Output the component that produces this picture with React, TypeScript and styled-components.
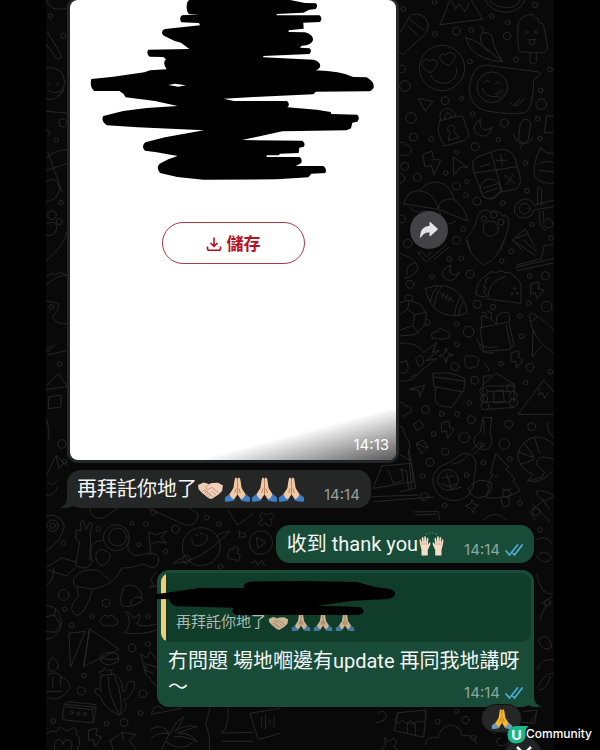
import React from "react";
import styled, { createGlobalStyle } from "styled-components";

const GlobalStyle = createGlobalStyle`
  * { box-sizing: border-box; }
  body {
    margin: 0;
    background: #000;
    font-family: Roboto, "Noto Sans CJK TC", sans-serif;
    color: #f4f6f5;
  }
`;

const Page = styled.div`
  position: relative;
  height: 100vh;
  overflow: hidden;
  padding: 0 46px;
`;

const Chat = styled.main`
  position: relative;
  height: 100%;
  overflow: hidden;
  background: #090909;
`;

const Wallpaper = styled.svg`
  position: absolute;
  inset: 0;
  width: 100%;
  height: 100%;
  fill: none;
  stroke: #272728;
  stroke-width: 3;
  stroke-linecap: round;
  stroke-linejoin: round;
`;

const Thread = styled.div`
  position: relative;
  display: flex;
  flex-direction: column;
  margin-top: -3px;
  padding: 0 20px 0 21px;
`;

const MediaRow = styled.div`
  display: flex;
  align-items: center;
  gap: 11px;
  margin-bottom: 7px;
`;

const MediaBubble = styled.article`
  width: 332px;
  padding: 3px;
  border-radius: 11px;
  background: #252627;
`;

const Photo = styled.div`
  position: relative;
  display: flex;
  flex-direction: column;
  align-items: center;
  height: 460px;
  overflow: hidden;
  border-radius: 8px;
  background: #fff;
`;

const PhotoScribble = styled.svg`
  display: block;
  width: 100%;
  height: 180px;
`;

const SaveButton = styled.button`
  display: flex;
  align-items: center;
  justify-content: center;
  gap: 5px;
  width: 143px;
  height: 42px;
  margin-top: 42px;
  padding: 0 0 1px;
  border: 1px solid #a83a42;
  border-radius: 21px;
  background: #fff;
  color: #b5121f;
  font-family: inherit;
  font-size: 17px;
  font-weight: 700;
  svg { margin-top: 2px; }
`;

const PhotoShade = styled.div`
  position: absolute;
  right: 0;
  bottom: 0;
  display: flex;
  align-items: flex-end;
  justify-content: flex-end;
  width: 200px;
  height: 60px;
  padding: 0 7px 6px;
  background: linear-gradient(165deg, transparent 53%, rgba(0, 0, 0, 0.66) 100%);
`;

const Time = styled.time<{ $tone: string }>`
  font-family: Inter, sans-serif;
  font-size: 15px;
  line-height: 18px;
  color: ${(p) => p.$tone};
`;

const ForwardButton = styled.button`
  display: grid;
  place-items: center;
  width: 38px;
  height: 38px;
  padding: 0;
  border: 0;
  border-radius: 50%;
  background: #434345;
`;

const Bubble = styled.article`
  position: relative;
  align-self: flex-start;
  display: flex;
  align-items: center;
  gap: 19px;
  height: 38px;
  padding: 0 11px 0 10px;
  border-radius: 14px;
  background: #252726;
`;

const SentBubble = styled(Bubble)`
  align-self: flex-end;
  margin-top: 17px;
  padding: 0 11px;
  background: #184c38;
`;

const Text = styled.p`
  display: flex;
  align-items: center;
  margin: 0;
  font-size: 20px;
  line-height: 26px;
`;

const Emojis = styled.span<{ $gap: number }>`
  display: inline-flex;
  align-items: center;
  gap: ${(p) => p.$gap}px;
`;

const Meta = styled.span`
  display: flex;
  align-items: center;
  align-self: flex-end;
  gap: 5px;
  padding-bottom: 4px;
`;

const Tail = styled.svg<{ $side: "left" | "right" }>`
  position: absolute;
  bottom: 0;
  ${(p) => p.$side}: -7px;
  width: 18px;
  height: 18px;
`;

const ReplyBubble = styled.article`
  position: relative;
  align-self: flex-end;
  width: 377px;
  margin-top: 7px;
  padding: 3px 3px 5px 4px;
  border-radius: 12px;
  background: #184c38;
`;

const Quote = styled.blockquote`
  display: flex;
  align-items: flex-end;
  height: 69px;
  margin: 0;
  padding: 0 10px 8px 15px;
  border-radius: 9px;
  background: linear-gradient(90deg, #f3cd75 5px, #103c2a 5px);
`;

const QuoteText = styled.p`
  display: flex;
  align-items: center;
  gap: 2px;
  margin: 0;
  font-size: 15px;
  line-height: 24px;
  color: #a9bbb2;
`;

const QuoteScribble = styled.svg`
  position: absolute;
  top: 8px;
  left: -2px;
  width: 240px;
  height: 38px;
`;

const ReplyBody = styled.div`
  display: flex;
  flex-wrap: wrap;
  justify-content: space-between;
  padding: 6px 8px 0 7px;
`;

const ReplyText = styled.span`
  font-size: 20px;
  line-height: 26px;
`;

const ReplyMeta = styled.span`
  display: flex;
  align-items: center;
  gap: 5px;
  height: 18px;
  margin-top: 10px;
`;

const Reaction = styled.button`
  position: absolute;
  right: 12px;
  bottom: -26px;
  display: grid;
  place-items: center;
  width: 41px;
  height: 29px;
  padding: 0;
  border: 1px solid #101211;
  border-radius: 15px;
  background: #252726;
`;

const ScrollButton = styled.button`
  position: absolute;
  right: 12px;
  bottom: -24px;
  display: flex;
  justify-content: center;
  width: 37px;
  height: 37px;
  padding: 9px 0 0;
  border: 0;
  border-radius: 50%;
  background: #222324;
`;

const Brand = styled.div`
  position: absolute;
  right: 8px;
  bottom: 4px;
  display: flex;
  align-items: center;
  color: #fff;
  font-family: Inter, sans-serif;
  font-size: 12px;
  font-weight: 500;
  line-height: 24px;
`;

const BrandMark = styled.span`
  position: relative;
  display: grid;
  place-items: center;
  width: 19px;
  height: 22px;
  font-family: Lato, sans-serif;
  font-size: 14px;
  font-weight: 900;
  svg { position: absolute; inset: 0; }
  b { position: relative; }
`;

function Pray({ size = 27, skin = "#f3c9a5", line = "#b98463", sleeve = "#3f7fc6" }) {
  return (
    <svg width={size} height={size} viewBox="0 0 27 27" role="img" aria-label="folded hands">
      <path d="M1 21.5 6 17.5 12 20.5 10 24.5 Q6 26 1 25.5Z" fill={sleeve} />
      <path d="M26 21.5 21 17.5 15 20.5 17 24.5 Q21 26 26 25.5Z" fill={sleeve} />
      <path d="M12.2 1.5 Q10.8 1.4 10.6 4 L9.4 12 5.6 18 Q6.5 22 9.8 23.2 L13.5 18.5 V3Z" fill={skin} />
      <path d="M14.8 1.5 Q16.2 1.4 16.4 4 L17.6 12 21.4 18 Q20.5 22 17.2 23.2 L13.5 18.5 V3Z" fill={skin} />
      <path d="M13.5 3V18.5M12 12.5 10.8 17M15 12.5 16.2 17" fill="none" stroke={line} strokeWidth="1" />
    </svg>
  );
}

function Handshake({ size = 27, skin = "#f1cfb8", line = "#b98b75" }) {
  return (
    <svg width={size} height={size} viewBox="0 0 27 27" role="img" aria-label="handshake">
      <path d="M1 9 6.5 6.5 12 8 15 7 21 6.7 26 9.5 25 15 21.5 18.5 15.5 22.5 Q13.5 23.5 11 21.8 L4.5 16.5 1.5 13Z" fill={skin} />
      <path d="M12 8 8.5 12 Q9.5 14.5 13 12.2 L15 11.5 22 17M19 19 14.5 15M16.5 21 12 17.5M5 15.8 7 14 9 15 7.5 17.8M9 15l2 1-1.5 3.5M11 17l2 1.5-1.4 2.8" fill="none" stroke={line} strokeWidth="0.8" strokeLinejoin="round" />
    </svg>
  );
}

function RaisedHands() {
  return (
    <svg width="27" height="27" viewBox="0 0 27 27" role="img" aria-label="raised hands">
      {[false, true].map((flip) => (
        <g key={String(flip)} transform={flip ? "translate(27 0) scale(-1 1)" : undefined}>
          <path d="M2 13 Q1 8 2.5 8 L4 12 3.8 6.5 Q4.8 5.2 5.5 7 L6 11.5 6.3 5.6 Q7.4 4.5 8 6.4 L8 11.5 9 7 Q10.3 6 10.4 8 L9.8 14 11.2 11.6 Q13 11.3 12.2 13.8 L9.8 19 V24.5 H3.5 V19Z" fill="#f5dcc5" />
          <path d="M4 12V14M6 11.5V14M8 11.5V14" stroke="#c99f83" strokeWidth=".7" />
          <path d="M9 3.8 8.4 2.2M12 2.6V1.2" stroke="#668477" strokeWidth="1" />
        </g>
      ))}
    </svg>
  );
}

function Ticks() {
  return (
    <svg width="18" height="14" viewBox="0 0 18 14" fill="none" stroke="#50aed6" strokeWidth="1.7" role="img" aria-label="read">
      <path d="M1 8 4.5 12 12.5 2M8 10.5 9.5 12 17.2 2" strokeLinecap="round" strokeLinejoin="round" />
    </svg>
  );
}

type Dot = [number, number, number];
function Dots({ items }: { items: Dot[] }) {
  return (
    <>
      {items.map(([x, y, r]) => (
        <circle key={`${x}-${y}`} cx={x} cy={y} r={r} />
      ))}
    </>
  );
}

const upperDots: Dot[] = [
  [10, 27, 7], [104, 6, 7], [105, 102, 7], [169, 93, 12], [214, 90, 7], [275, 49, 7], [323, 68, 7], [321, 108, 11],
  [405, 15, 8], [348, 179, 8], [210, 184, 7], [5, 207, 12], [15, 258, 16], [135, 302, 12], [185, 295, 6], [33, 354, 16],
  [424, 313, 16], [422, 271, 7], [313, 369, 12], [413, 356, 7], [218, 342, 7], [40, 411, 12], [94, 417, 7], [225, 440, 12],
  [295, 419, 7], [170, 456, 6], [14, 499, 12], [52, 532, 12], [137, 519, 7], [169, 558, 12], [200, 545, 6], [376, 489, 7],
  [231, 604, 12], [308, 609, 7], [381, 572, 7], [198, 585, 7], [190, 688, 7], [170, 721, 12], [23, 731, 13], [395, 673, 7], [450, 208, 7],
  [5, 657, 12], [453, 714, 7], [420, 416, 7],
];

const lowerDots: Dot[] = [
  [148, 57, 7], [184, 55, 7], [96, 110, 7], [210, 103, 12], [30, 133, 12], [334, 34, 7], [305, 63, 7],
  [389, 108, 7], [436, 107, 12], [440, 200, 16], [386, 190, 7], [232, 193, 12], [279, 201, 8], [170, 253, 7], [206, 275, 16],
  [360, 229, 7], [365, 289, 7], [171, 313, 7], [165, 380, 12], [303, 371, 7], [390, 382, 12], [452, 395, 7], [224, 421, 12],
  [377, 428, 7], [208, 489, 7], [76, 509, 12], [125, 522, 7], [171, 522, 7], [214, 539, 12], [326, 553, 12], [395, 560, 12],
  [193, 592, 16], [101, 582, 7], [313, 612, 16], [135, 635, 11], [330, 657, 7], [250, 668, 7], [90, 667, 12], [68, 708, 7],
  [73, 770, 12], [134, 797, 7], [360, 789, 7],
];

const leftDots: Dot[] = [
  [70, 129, 7], [175, 86, 7], [276, 70, 6], [318, 72, 7], [340, 37, 8], [407, 87, 12], [500, 53, 7], [537, 72, 7],
  [377, 155, 7], [296, 134, 6], [71, 285, 16], [75, 328, 7], [198, 309, 12], [155, 349, 7], [95, 376, 7], [323, 349, 7],
  [276, 444, 12], [323, 432, 8], [267, 505, 7], [132, 527, 7], [124, 573, 12], [309, 581, 12], [200, 671, 7], [252, 668, 12],
  [302, 639, 7], [40, 663, 7], [542, 200, 7], [440, 178, 12],
];

function ChatWallpaper() {
  return (
    <Wallpaper viewBox="46 0 508 750" preserveAspectRatio="xMinYMin slice" aria-hidden="true">
      <g transform="translate(400 0) scale(.3333)">
        <Dots items={upperDots} />
        <path d="M150 0 120 74 248 58 214 0M155 3 167 28 178 10 194 36 208 7" />
        <path d="M255 0Q275 37 322 37 363 32 375 0M267 0Q285 22 322 23 352 22 361 0" />
        <path d="M36 44Q72 34 85 72L80 98 8 164-10 150M0 98 30 49M21 76 55 108M30 58 72 91" />
        <path d="M354 75Q360 43 399 43 399 57 414 54 414 72 427 70 432 76 435 94L443 145Q439 159 421 158L362 156Q350 154 354 75ZM390 160V186Q400 198 409 186V160M374 90l12 6-12 6M414 89l-11 7 13 5M382 120 407 118M388 121v10q8 8 15 0v-10" />
        <circle cx="126" cy="204" r="68" />
        <path d="M91 218Q62 204 66 189 75 171 89 184 100 170 112 187 115 201 91 218ZM147 197Q119 188 119 171 124 157 138 165 149 149 164 164 170 176 147 197ZM92 226Q106 255 143 248 172 240 170 207" />
        <path d="M197 112Q240 125 272 157 290 172 308 185 240 181 211 144 202 130 197 112ZM240 77Q257 89 246 101 235 111 249 139 258 154 270 155M246 100Q262 92 277 110 278 143 308 184" />
        <path d="M253 195Q215 199 208 264 207 321 261 333 336 347 373 338 399 332 401 241L423 221 415 216Z" />
        <circle cx="277" cy="262" r="46" />
        <path d="M254 247q7-12 15 0M286 251q8-10 15 1M247 265q8 30 46 24M287 282l18-15M289 288l21-16M295 297l20-18M329 307l12 11 17-20M344 315l8 3 20-22" />
        <path d="m56 296 43 8-22 29ZM116 378Q107 394 134 438L195 421 207 406 188 348 164 350 119 363ZM122 360q-10-30 20-35 24 3 25 27M134 357q0-17 9-18 12 1 11 14M143 389q0-15 14-13 14 8 4 18l16 19-32 8 4-22Z" />
        <path d="M241 358Q211 377 228 400 263 424 276 381 256 398 243 381 237 370 241 358ZM361 372Q366 355 383 359 394 363 391 379L385 418Q370 440 356 418ZM341 402Q347 430 368 432 392 431 397 412M365 433 362 445M440 348H460M440 348 433 398H460" />
        <path d="M69 463 96 453 101 479 122 480 102 526 94 496 76 500ZM160 471 204 503 183 500 162 525Z" />
        <path d="M220 482Q213 497 230 539L251 592Q276 604 294 578L348 567Q365 557 360 528L344 471Q329 444 296 449L244 466Q226 471 220 482ZM274 459 306 574M225 519 352 500M240 501 268 492M289 481h31M302 463l5 33M314 526l30 24M339 524l-20 30M250 564 291 552M253 578 291 565" />
        <circle cx="271" cy="567" r="30" />
        <path d="M422 443Q398 487 403 525 416 553 460 550M422 443Q434 463 460 460M420 490q20-10 40-2M417 511l43 5M413 565q8-7 12 3v48M413 565v50M460 601l-57 14q-17-27-41-14-25 14-17 39 20 24 45 9 10-7 11-19l59-10M419 634q-6 50 20 58M430 633v27" />
        <circle cx="374" cy="626" r="16" /><circle cx="445" cy="670" r="14" />
        <path d="M11 612Q21 572 55 572 103 575 115 627 117 595 158 597 194 615 203 663L115 628 11 612M60 571Q90 533 132 552 158 571 162 597M31 623Q50 645 74 632M119 634q10 58 48 29" />
        <path d="M0 427q14-2 14 8 20 1 21 17-2 18-35 14M0 520q18 4 14 21L0 550" />
        <path d="M198 715Q226 691 234 643 256 620 270 637 293 625 307 648 326 641 327 675 319 711 301 750M202 721 211 750M338 719 376 687 404 741M338 719 365 750M348 716 384 701" />
        <circle cx="272" cy="686" r="23" /><circle cx="281" cy="645" r="10" /><circle cx="303" cy="666" r="9" /><circle cx="252" cy="656" r="8" />
      </g>
      <g transform="translate(400 240) scale(.3333)">
        <Dots items={lowerDots} />
        <path d="M54 39 78 66 140 14M102 59 146 22M54 39l10-5 15 17 18-17M0 40Q46 55 54 82 49 107 13 116M21 105q-7-30 25-37M199 0Q205 45 253 76 295 54 312 0M337 0 405 46M370 0 409 34M347 82 460 56M350 75 424 57 432 18 460 12M352 92 460 69" />
        <path d="M151 76Q118 90 131 112 157 137 179 97 162 112 150 98Z" />
        <path d="M76 146Q138 120 178 162 201 192 201 220 146 239 105 207 80 176 76 146ZM113 139Q94 160 90 185M125 139Q105 166 103 198M181 172Q164 197 165 228M190 183Q176 204 177 225M121 160 161 184M132 158l-7 15M143 164l-7 15M154 170l-8 15" />
        <path d="M228 163Q225 126 261 105 269 90 290 98 302 87 315 98 334 94 341 109 360 117 364 142L362 190 263 177Q264 121 316 110M228 163q20 12 32 5-16-15-1-22-16-8 0-18-8-10 8-15" />
        <circle cx="343" cy="146" r="3" /><circle cx="336" cy="162" r="3" /><circle cx="351" cy="160" r="3" />
        <path d="m394 132 23-7-1 22 16 4-22 26-3-19-14 4ZM0 188 25 180 62 193 79 219 75 256 45 284 0 288M0 224 23 207 45 225 38 257 0 270M16 180q-4-18 15-15 10 4 5 17M75 236q19 4 15 16-13 9-20 0M45 225 76 217M38 257l17 22M23 207l5-25" />
        <path d="M241 263 326 246 342 315 330 329 252 334ZM245 260V227L272 236 290 252 290 230 307 216 327 219 329 245M246 219q5-5 10 0l5 9M263 214l11 4v17M230 294Q234 330 292 321M238 315Q240 345 281 338M318 255 332 322" />
        <path d="M388 230Q387 219 402 222 438 243 460 271M388 230Q397 300 460 338M394 244 411 232M399 271 397 350 425 320M97 294Q87 276 110 276 118 257 132 272 151 272 150 291 131 302 97 294ZM0 309Q52 305 71 338L110 307 97 337 118 331 77 362 111 356 66 389Q42 429 0 423M48 355l17-11 7 26-14 9ZM0 367l20-5 5 24-9 13H0M32 411l17-8" />
        <path d="m138 325 8 17 14 3-17 6-4 17-6-16-16-5 16-6ZM194 359q-2-17 17-10 18-4 25 9 2 23-18 25-19 6-22-7ZM335 338l21-5 1 20 14 5-21 26-3-21-13 4ZM258 370q-7 4 2 10 12 6 4 14" />
        <path d="M99 401Q148 391 195 416L191 456 103 440ZM107 442Q100 490 119 497L156 502 186 457M103 411 193 423M29 447 74 436 60 470 57 452Z" />
        <path d="M249 434 288 400 347 435M250 435V409L276 407M260 438H342M265 454H330M261 486H329M258 508 338 503M283 455l26-5 4 36-31 3ZM249 434v52M342 438v50" />
        <circle cx="251" cy="454" r="12" /><circle cx="252" cy="476" r="11" /><circle cx="255" cy="498" r="12" /><circle cx="332" cy="444" r="12" /><circle cx="340" cy="466" r="12" /><circle cx="341" cy="489" r="12" />
        <path d="M354 523 431 420 460 455M354 523H460M417 445v21l10-8 8 17 9-17M125 549l22-6 2 20 14 5-21 28-3-24-12 4ZM41 552l19-11 11 17-19 14ZM49 610l20-10 15 22-19 19ZM49 610l17 9 18 3M0 488q10-3 15 10 20-3 20 13-1 10-13 8-4 15-16 7" />
        <path d="M250 532 275 533 270 577Q282 603 268 624 244 638 223 613 217 590 240 577ZM236 610 213 632M247 618 221 643M252 540v42M98 719Q101 684 143 669 162 661 187 641 222 634 228 671L219 742Q204 785 155 782 102 773 98 719ZM158 672Q194 666 203 645" />
        <circle cx="144" cy="720" r="31" /><circle cx="246" cy="615" r="6" />
        <path d="M127 714q8-8 15 0M148 710q7-8 15 0M125 728q17 22 44 3M0 559q10-3 15 28 20 20 12 42L47 744 0 756M0 688l20 4 5 54M26 630 34 745M0 644l35 21" />
        <path d="M289 641 325 681 318 687 345 717 338 722 361 751Q333 776 258 774L269 740 261 738 278 704 272 701ZM302 774l7 27 19-4-1-27M281 704q3 9 13 5M306 744q4 12 12 4 8 9 17-5" />
        <path d="M460 613Q441 591 406 591 365 599 352 647 362 690 399 703L382 725 426 711 434 698 411 674Q406 639 460 658M375 611 402 650M404 592 418 640M357 637l45 16M362 674l40-16M409 754q25-8 51 13M409 754q0 19 23 26L388 815 406 840M460 771l-29 14 17 22M196 797l15-5 5-13 6 13 14 4-14 9-1 15-9-14ZM42 816 115 814 118 840M49 825l60-3M250 840q35-35 70 0M441 548q2 30 19 45" />
      </g>
      <g transform="translate(40 500) scale(.3333)">
        <Dots items={leftDots} />
        <circle cx="38" cy="77" r="17" /><circle cx="38" cy="77" r="8" />
        <path d="M20 47Q63 39 73 78 64 124 20 152M148 25Q159 65 191 53L234 25M326 25 435 75Q471 80 475 43L450 25M565 30 592 76 640 40M662 43q9-13 17 4 17-13 22-2 4 9-11 14 12 13 0 18-8 4-13-9-14 15-19 3-4-7 10-12-12-9-6-16Z" />
        <circle cx="229" cy="113" r="39" /><circle cx="233" cy="111" r="27" />
        <path d="M187 122Q139 122 157 184 140 218 107 196L119 125 107 116 109 90 124 91 121 67 128 60 139 89 149 66 158 73 151 97 152 128 149 180M169 158Q188 137 211 163 209 190 187 197 161 187 169 158ZM267 120Q253 152 284 167L324 160Q357 157 356 180 357 205 330 202L311 192Q274 205 245 204 233 235 203 252 166 270 150 266L110 260M101 236Q98 260 110 260L116 289Q90 315 96 333 111 360 132 330 150 302 157 269M103 234Q121 203 175 211L208 240M22 200 65 173 110 187M23 210 80 228 103 205M41 205q-2 46-20 49M326 96 332 164M330 97l17 7 35-11-18 18 15 18-27-4-21 8" />
        <circle cx="484" cy="140" r="57" />
        <path d="M426 174Q397 190 399 190 481 188 569 94 540 96 529 110M455 118q2 27 30 17 25-14 14-31M467 105l6 1M481 102l7-2M598 93l8 8 8-4 4 13-18 2ZM563 163l7-17 9 5 4-13 13 7-4 15 9 5-5 17-29-7Z" />
        <circle cx="663" cy="128" r="35" /><path d="m650 113 27 14-22 18ZM635 188l12-6 6 14 13-15 8 16" />
        <path d="M249 267Q251 253 278 256 307 262 307 302 269 330 243 315 239 288 249 267ZM271 315q2-30 34-22M20 316Q61 319 64 369 60 411 20 418M20 350l23-5 18 28-15 24-26-2M43 345l4-18M186 373q-14-10 2-22 6-9 17-2 16-8 20 7 16 5 4 18-14 9-23 1-14 8-20-2ZM258 395Q280 361 256 335 275 339 280 355L299 343Q303 361 290 370 299 384 345 374M251 398q50 10 99-8M329 262l15-2-13-22 19-22M333 257l17 2" />
        <path d="M88 400 136 394 92 501ZM149 387 237 448 132 499ZM183 465Q207 451 234 463L236 483Q207 504 185 487ZM183 473q30 11 52 2M149 387 132 499M37 472Q15 498 30 511 45 520 56 498 53 482 37 472ZM25 524Q50 511 62 529 91 545 91 564 60 609 22 593M39 531l-1 29M62 529v30M20 575h46M303 463l17 11 10-20 19 24M303 463l14 59 34 39M314 491l36 10M309 494l13 10-9 6 28 11" />
        <path d="M183 528Q176 550 184 575 170 559 165 570 162 582 182 590 190 623 238 646 272 621 251 600 281 586 285 548 270 535 260 554 258 574 249 575 247 531 223 523 196 523 183 528ZM205 532Q204 588 239 644M225 531Q249 587 243 644M185 523l-9-7 12-2 6-11 8 10 15-4-6 17M74 613 169 622 160 669 68 659ZM74 613l12-8 82 9M76 620l81 9 11-7M157 629l3 38" />
        <circle cx="95" cy="638" r="5" /><circle cx="115" cy="641" r="5" /><circle cx="135" cy="643" r="5" />
        <path d="M334 643Q342 606 366 624M334 643 424 625M20 700q14-11 29-5 10-20 23-7 8 10 27-5 16 2 10 20 19 10 3 47M45 750q-7-25 8-30 15-5 16 14 5-20 19-13 13 6 5 29M146 691l25-7-3 21 17 6-20 29-5-22-12 4ZM208 724l39-27 41 7-21 17 23 29M212 724l8 26M247 697l2 24M330 690q35-27 58 12Q380 716 365 750M388 702q-27-10-54 12M390 702q14-35 40-51-8 30-28 44 35-24 68-15-28 9-55 19 38-1 58 27-36-20-69-16M376 725q50 34 83 2M510 625 497 671Q514 715 508 750M565 625q0 63-21 74L639 697M547 724h93M630 640 720 625M630 640 655 719 720 700M665 652v28M677 645v42M690 661v13M702 652v31" />
      </g>
      <g transform="translate(36 0) scale(.3333)">
        <Dots items={[[43, 48, 7], [82, 107, 8], [81, 369, 12], [61, 419, 7], [75, 608, 7], [48, 646, 13], [70, 665, 9], [46, 921, 7], [71, 1092, 7], [78, 1332, 13], [86, 1385, 7]]} />
        <path d="M30 0q15 38 60 25M34 96Q52 124 70 155 85 177 63 177L30 133M30 203q52-4 56 42-6 62-56 51M35 257l7-5M61 254l7-3M38 272q20 15 44-5M67 286l17-13M30 334l65 5M30 390q15 0 9 15M30 478q20-28 65-30M35 455 78 575M30 512l65-22M30 545q35-21 41 24-10 35-41 36M30 670q40-11 31 20-10 23-31 15M30 782q50-36 65-90M32 830q10-15 28-4 12-17 35 2M30 855q40-35 65-28M30 903l38 7q-1 30-20 39 17 30 47 21M35 1065l60-14M31 1050l17-15M35 1055l23-20M32 1158 68 1120 92 1158M30 1168 95 1160M40 1190l35-4v35l-37 5ZM30 1255q15 40 6 68M32 1425 60 1366 96 1400M60 1366l9 40 14-17M30 1486q24 4 35-24M35 1445q15 19 28-2" />
      </g>
      <g transform="translate(370 460) scale(.3333)">
        <Dots items={[[290, 45, 7], [410, 100, 12], [510, 210, 7], [499, 155, 12]]} />
        <path d="M5 110 145 105M10 85l120-20-5-55L35 18 10 85M55 30l15 40 30-8-6-36M10 125 190 111M230 40 245 90 275 80M295 85q30-40 70-15 5 35-37 44-29-4-33-29ZM480 60q20 20 68-26M485 130l55 55M498 240q30-20 49 12M500 290q20-29 45 3-18 29-45-3M500 345q15 64 48 57M515 430l30-19M510 480q10-40 30-53M505 540q30-30 40 21-27 20-40-21" />
      </g>
      <g transform="translate(370 570) scale(.3333)">
        <Dots items={[[533, 99, 10], [203, 455, 7], [286, 450, 11], [310, 503, 8], [260, 424, 6]]} />
        <path d="M25 430q7-14 20-2 9 14-3 22l-25 10M85 428 169 420 161 502 74 482ZM85 428 75 451q12 16 22 0 12 16 24 0 13 15 24 1 13 9 24-4l-5-26M112 487v-28l24 4v30M44 504l12 10 14-10 10 12-9 13 12 10-12 9-14-8-13 8-9-13 12-8ZM165 525q6-31 39-21 4-30 37-39 29 1 35 33 33-10 45 24M370 491q35-22 48 12 2 31-31 23-19-20 5-22M500 430l-20 30M504 350q23-47 46-40M501 300q15-40 49-30M507 360q20 5 35-42M460 425l40-5-5 40-42-4" />
      </g>
    </Wallpaper>
  );
}

const quotedPray = { size: 20, skin: "#d0b190", line: "#8d7157", sleeve: "#43779c" };

export default function App() {
  return (
    <>
      <GlobalStyle />
      <Page>
        <Chat>
          <ChatWallpaper />
          <Thread>
            <MediaRow>
              <MediaBubble>
                <Photo>
                  <PhotoScribble viewBox="30 0 978 540" preserveAspectRatio="none" aria-hidden="true">
                    <path d="M387 0H690L735 9 768 10Q775 17 767 27L748 29 730 38 650 42 650 46 779 46Q789 55 780 66L730 68 731 86 686 91 686 96 735 97Q760 104 759 120 756 136 725 137L720 143 749 145Q757 153 748 162L610 168V172L760 179Q781 184 781 198 778 208 766 211 842 213 880 231L920 232Q944 246 941 263 936 274 922 274L768 275 760 283 580 291 491 296 522 303 681 303Q692 314 682 322L770 329 812 336 814 342 892 344Q901 354 892 365L877 368 873 385 860 391 667 394 546 420 727 422Q738 431 731 440L718 443 716 459 660 461 656 466 620 466V471L719 471Q729 479 723 490L707 498 790 498Q802 506 796 519L754 521 745 532 650 538 430 539 352 531 300 519Q287 503 299 491L325 478 353 468 290 457 255 452Q242 439 256 427L315 412 432 391 233 382 141 376Q121 362 130 348L190 333 260 324 353 318 285 303 197 292 190 281 178 273 103 273Q88 261 94 237L160 230 253 217 270 211 320 208Q306 188 318 178L310 171 269 170Q257 160 265 149L388 147 363 128 344 123 309 106Q301 92 315 87L420 76 417 69 364 67Q356 54 366 46L419 43 386 42Q376 29 382 7Z" fill="#000" />
                    <path d="M325 255 345 251 378 256 355 260Z" fill="#fff" />
                  </PhotoScribble>
                  <SaveButton type="button">
                    <svg width="16" height="16" viewBox="0 0 16 16" fill="none" stroke="currentColor" strokeWidth="1.6" aria-hidden="true">
                      <path d="M8 1.5V10M4.5 7 8 10.4 11.5 7M1.5 10.5V12.5Q1.5 14.3 3.5 14.3H12.5Q14.5 14.3 14.5 12.5V10.5" />
                    </svg>
                    儲存
                  </SaveButton>
                  <PhotoShade>
                    <Time $tone="#fff">14:13</Time>
                  </PhotoShade>
                </Photo>
              </MediaBubble>
              <ForwardButton type="button" aria-label="Forward">
                <svg width="20" height="18" viewBox="0 0 20 18" fill="#e3e3e4" aria-hidden="true">
                  <path d="M10.5 1.6Q10.6.4 11.6 1.2L18.5 7.4Q19.2 8 18.5 8.7L11.6 15Q10.6 15.8 10.5 14.5V11.5Q5 11 2 16.3 1.2 17.2 1 16 1 5.7 10.5 4.8Z" />
                </svg>
              </ForwardButton>
            </MediaRow>

            <Bubble>
              <Tail $side="left" viewBox="0 0 18 18" aria-hidden="true">
                <path d="M7 0V8Q7 15 0 17.5 8 19 13 16L18 10V0Z" fill="#252726" />
              </Tail>
              <Text>
                再拜託你地了
                <Emojis $gap={0}>
                  <Handshake />
                  <Pray />
                  <Pray />
                  <Pray />
                </Emojis>
              </Text>
              <Meta>
                <Time $tone="#9b9d9c">14:14</Time>
              </Meta>
            </Bubble>

            <SentBubble>
              <Text>
                收到 thank you
                <RaisedHands />
              </Text>
              <Meta>
                <Time $tone="#8ea89d">14:14</Time>
                <Ticks />
              </Meta>
            </SentBubble>

            <ReplyBubble>
              <Tail $side="right" viewBox="0 0 18 18" aria-hidden="true">
                <path d="M11 0V8Q11 15 18 17.5 10 19 5 16L0 10V0Z" fill="#184c38" />
              </Tail>
              <Quote>
                <QuoteText>
                  再拜託你地了
                  <Emojis $gap={2}>
                    <Handshake size={21} skin="#cdb495" line="#8f7860" />
                    <Pray {...quotedPray} />
                    <Pray {...quotedPray} />
                    <Pray {...quotedPray} />
                  </Emojis>
                </QuoteText>
              </Quote>
              <QuoteScribble viewBox="15 39 720 114" aria-hidden="true">
                <path d="M15 88Q50 83 85 78L150 69 283 69Q277 54 300 50L460 48Q540 49 620 51L675 66 720 72Q737 77 735 89 731 98 715 102L610 107 502 122 630 126Q644 132 639 143 635 149 620 150H260Q242 144 249 132L253 128 80 124Q58 117 57 102L15 103Z" fill="#000" />
              </QuoteScribble>
              <ReplyBody>
                <ReplyText>冇問題 場地嗰邊有update 再同我地講呀</ReplyText>
                <ReplyText>～</ReplyText>
                <ReplyMeta>
                  <Time $tone="#8ea89d">14:14</Time>
                  <Ticks />
                </ReplyMeta>
              </ReplyBody>
              <Reaction type="button" aria-label="Reactions">
                <Pray size={22} skin="#f6b92f" line="#b87a1b" sleeve="#6f97bb" />
              </Reaction>
            </ReplyBubble>
          </Thread>
          <ScrollButton type="button" aria-label="Scroll to latest">
            <svg width="16" height="10" viewBox="0 0 16 10" fill="none" stroke="#fff" strokeWidth="2.5" aria-hidden="true">
              <path d="M1 1 8 8 15 1" />
            </svg>
          </ScrollButton>
        </Chat>
        <Brand>
          <BrandMark>
            <svg width="22" height="22" viewBox="0 0 22 22" aria-hidden="true">
              <path d="M9 3H21.5Q19 5 18.5 8 20 20 9 20.5.5 20 .5 11.5 1 3.5 9 3Z" fill="#19b78a" />
            </svg>
            <b>U</b>
          </BrandMark>
          Community
        </Brand>
      </Page>
    </>
  );
}
